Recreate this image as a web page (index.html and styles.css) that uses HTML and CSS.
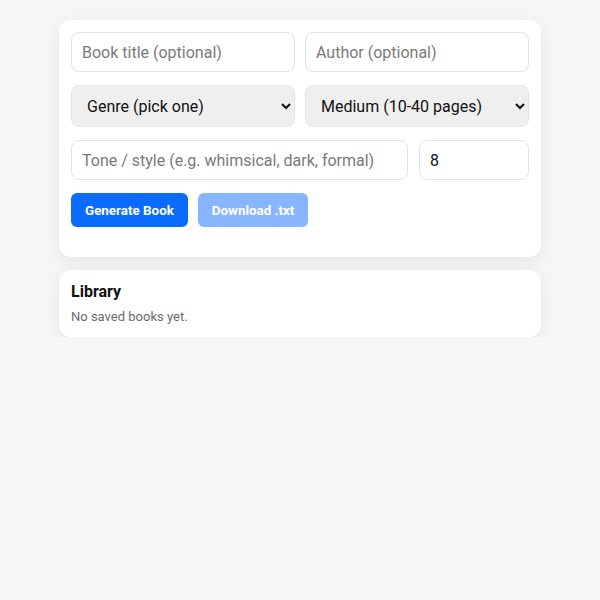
FILE: index.html
```html
<!DOCTYPE html>
<html>
<head>
<meta charset="utf-8">
<link rel="stylesheet" href="styles.css">
</head>
<body>
<main class="wrap">
  <section class="card form">
    <div class="row two">
      <input class="field" type="text" placeholder="Book title (optional)">
      <input class="field" type="text" placeholder="Author (optional)">
    </div>
    <div class="row two">
      <select class="field sel">
        <option>Genre (pick one)</option>
      </select>
      <select class="field sel">
        <option>Medium (10-40 pages)</option>
      </select>
    </div>
    <div class="row tone">
      <input class="field" type="text" placeholder="Tone / style (e.g. whimsical, dark, formal)">
      <input class="field" type="number" value="8">
    </div>
    <div class="actions">
      <button class="btn">Generate Book</button>
      <button class="btn disabled" disabled>Download .txt</button>
    </div>
  </section>
  <section class="card library">
    <h2 class="lib-title">Library</h2>
    <p class="lib-empty">No saved books yet.</p>
  </section>
</main>
</body>
</html>
```
FILE: styles.css
```css
* { box-sizing: border-box; }
html, body { margin: 0; padding: 0; }
body {
  background: #f5f6f8;
  font-family: Roboto, "Liberation Sans", Arial, sans-serif;
  color: #111;
}
.wrap {
  width: 482px;
  margin: 0 auto;
  padding-top: 20px;
  display: flex;
  flex-direction: column;
  gap: 13px;
}
.card {
  background: #fff;
  border-radius: 12px;
  box-shadow: 0 4px 18px rgba(0, 0, 0, 0.07);
}
.form {
  padding: 12px 12px 30px;
  display: flex;
  flex-direction: column;
  gap: 13px;
}
.row { display: grid; gap: 10px; }
.two { grid-template-columns: 1fr 1fr; }
.tone { grid-template-columns: 1fr 110px; gap: 11px; }
.field {
  height: 40px;
  border: 1px solid #e2e2e2;
  border-radius: 8px;
  padding: 0 10px;
  font-family: inherit;
  font-size: 16px;
  color: #111;
  background: #fff;
  min-width: 0;
}
.field::placeholder { color: #7a7a7a; }
.sel {
  height: 42px;
  background-color: #efefef;
  border-color: #e6e6e6;
  padding: 0 11px;
  font-size: 16px;
}
.actions { display: flex; gap: 10px; }
.btn {
  height: 34px;
  padding: 0 14px;
  border: none;
  border-radius: 6px;
  background: #0b6bff;
  color: #fff;
  font-family: inherit;
  font-weight: 700;
  font-size: 13.4px;
}
.btn.disabled { background: #87b6fe; }
.library { padding: 12px; }
.lib-title {
  margin: 0;
  font-size: 16px;
  font-weight: 700;
  line-height: 20px;
  padding-top: 0;
}
.lib-empty {
  margin: 7px 0 0;
  font-size: 13px;
  line-height: 16px;
  color: #6b6b6b;
}
```
